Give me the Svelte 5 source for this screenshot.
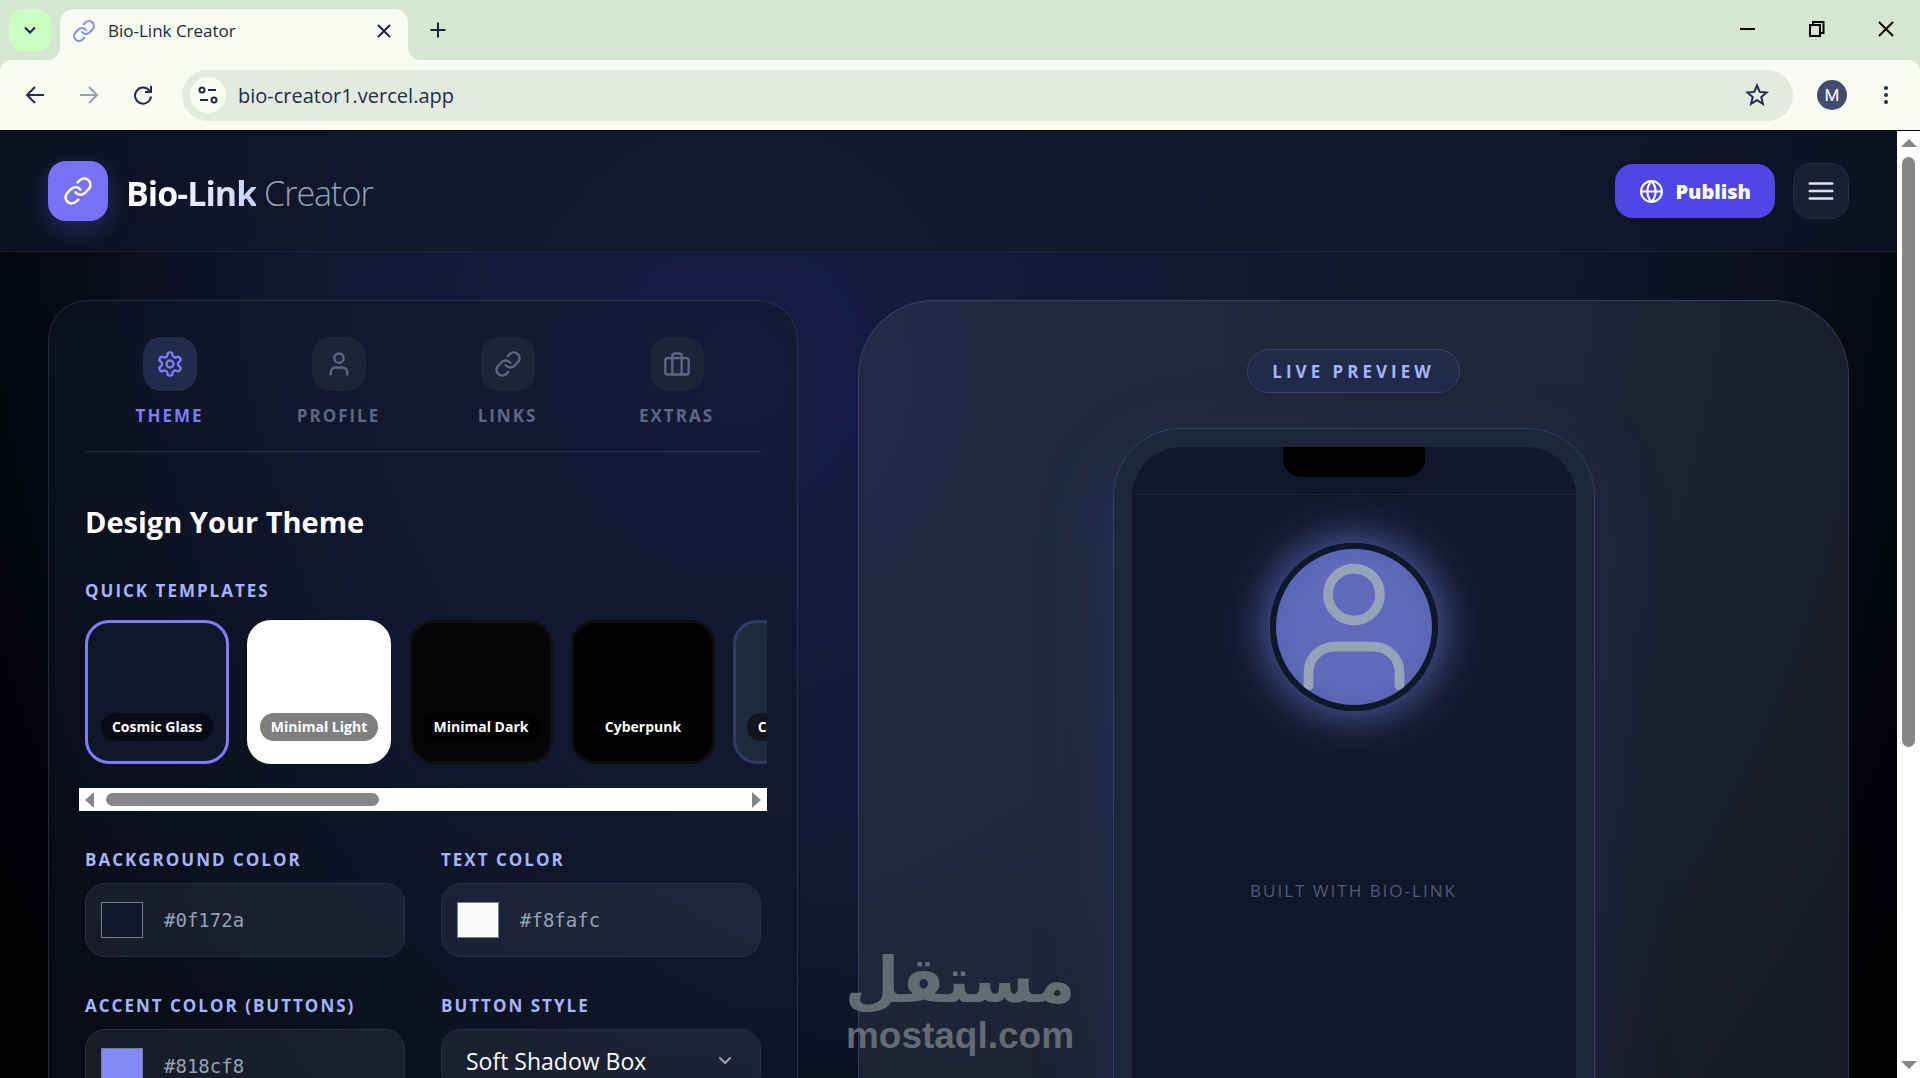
<script lang="ts">
  type Tab = { id: string; label: string };
  type Template = { name: string; cls: string };

  const tabs: Tab[] = [
    { id: 'theme', label: 'Theme' },
    { id: 'profile', label: 'Profile' },
    { id: 'links', label: 'Links' },
    { id: 'extras', label: 'Extras' },
  ];
  const templates: Template[] = [
    { name: 'Cosmic Glass', cls: 'cosmic' },
    { name: 'Minimal Light', cls: 'light' },
    { name: 'Minimal Dark', cls: 'dark' },
    { name: 'Cyberpunk', cls: 'cyber' },
    { name: 'Cotton Candy', cls: 'cotton' },
  ];

  let active = $state('theme');
  let template = $state('Cosmic Glass');
  let background = $state('#0f172a');
  let text = $state('#f8fafc');
  let accent = $state('#818cf8');
  let buttonStyle = $state('Soft Shadow Box');
</script>

{#snippet linkIcon()}
  <path d="M10 13a5 5 0 0 0 7.54.54l3-3a5 5 0 0 0-7.07-7.07l-1.72 1.71" />
  <path d="M14 11a5 5 0 0 0-7.54-.54l-3 3a5 5 0 0 0 7.07 7.07l1.71-1.71" />
{/snippet}

<div class="window">
  <div class="tabstrip">
    <button class="tab-search" aria-label="Search tabs">
      <svg viewBox="0 0 16 16" width="16" height="16"><path d="M3 5.5 8 10.5l5-5" /></svg>
    </button>
    <div class="tab">
      <svg class="favicon" viewBox="0 0 24 24" width="24" height="24">{@render linkIcon()}</svg>
      <span class="tab-title">Bio-Link Creator</span>
      <button class="tab-close" aria-label="Close tab">
        <svg viewBox="0 0 16 16" width="16" height="16"><path d="M2.500 2.500l11 11M13.500 2.500l-11 11" /></svg>
      </button>
    </div>
    <button class="new-tab" aria-label="New tab">
      <svg viewBox="0 0 16 16" width="16" height="16"><path d="M8 0.500v15M0.500 8h15" /></svg>
    </button>
    <div class="win-controls">
      <button aria-label="Minimize"><svg viewBox="0 0 16 16" width="16" height="16"><path d="M0 8h15" /></svg></button>
      <button aria-label="Restore">
        <svg viewBox="0 0 16 16" width="16" height="16"><path d="M1 4h10v11H1zM4 4V1h10.500v11H11" /></svg>
      </button>
      <button aria-label="Close"><svg viewBox="0 0 16 16" width="16" height="16"><path d="M1 1l14 14M15 1 1 15" /></svg></button>
    </div>
  </div>

  <div class="toolbar">
    <button class="nav" aria-label="Back">
      <svg viewBox="0 0 20 20" width="20" height="20"><path d="M19 10H2.500M10 2l-8 8 8 8" /></svg>
    </button>
    <button class="nav muted" aria-label="Forward">
      <svg viewBox="0 0 20 20" width="20" height="20"><path d="M1 10h16.500M10 2l8 8-8 8" /></svg>
    </button>
    <button class="nav" aria-label="Reload">
      <svg viewBox="0 0 20 20" width="20" height="20">
        <path d="M16.600 6A8 8 0 1 0 18 11.500" /><path d="M18 1v6h-6" />
      </svg>
    </button>
    <div class="omnibox">
      <button class="site-info" aria-label="Site information">
        <svg viewBox="0 0 20 20" width="20" height="20">
          <circle cx="4" cy="5" r="2.500" /><path d="M10 5h8M2 15h8" /><circle cx="16" cy="15" r="2.500" />
        </svg>
      </button>
      <input class="url" type="text" value="bio-creator1.vercel.app" aria-label="Address" />
      <button class="star" aria-label="Bookmark">
        <svg viewBox="0 0 24 24" width="24" height="24">
          <path d="M12 2.500l2.700 6.400 6.900.6-5.300 4.500 1.600 6.800L12 17.200l-5.900 3.600L7.700 14 2.400 9.500l6.900-.6z" />
        </svg>
      </button>
    </div>
    <button class="profile" aria-label="Profile M">M</button>
    <button class="menu" aria-label="Menu">
      <svg viewBox="0 0 6 20" width="6" height="20">
        <circle cx="3" cy="3" r="2" /><circle cx="3" cy="10" r="2" /><circle cx="3" cy="17" r="2" />
      </svg>
    </button>
  </div>

  <div class="viewport">
    <div class="page">
      <header>
        <div class="brand">
          <span class="logo"><svg viewBox="0 0 24 24" width="30" height="30">{@render linkIcon()}</svg></span>
          <h1><b>Bio-Link</b> Creator</h1>
        </div>
        <div class="actions">
          <button class="publish">
            <svg viewBox="0 0 24 24" width="25" height="25">
              <circle cx="12" cy="12" r="10" /><path d="M2 12h20" />
              <path d="M12 2a15.300 15.300 0 0 1 4 10 15.300 15.300 0 0 1-4 10 15.300 15.300 0 0 1-4-10 15.300 15.300 0 0 1 4-10z" />
            </svg>
            Publish
          </button>
          <button class="burger" aria-label="Open menu">
            <svg viewBox="0 0 24 24" width="30" height="30"><path d="M3 6h18M3 12h18M3 18h18" /></svg>
          </button>
        </div>
      </header>

      <main>
        <section class="editor">
          <nav class="tabs">
            {#each tabs as t (t.id)}
              <button class:on={active === t.id} onclick={() => (active = t.id)}>
                <span class="tab-icon">
                  <svg viewBox="0 0 24 24" width="28" height="28">
                    {#if t.id === 'theme'}
                      <path d="M12.220 2h-.44a2 2 0 0 0-2 2v.18a2 2 0 0 1-1 1.730l-.43.25a2 2 0 0 1-2 0l-.15-.08a2 2 0 0 0-2.730.73l-.22.38a2 2 0 0 0 .73 2.730l.15.1a2 2 0 0 1 1 1.720v.51a2 2 0 0 1-1 1.740l-.15.09a2 2 0 0 0-.73 2.730l.22.38a2 2 0 0 0 2.730.73l.15-.08a2 2 0 0 1 2 0l.43.25a2 2 0 0 1 1 1.730V20a2 2 0 0 0 2 2h.44a2 2 0 0 0 2-2v-.18a2 2 0 0 1 1-1.730l.43-.25a2 2 0 0 1 2 0l.15.08a2 2 0 0 0 2.730-.73l.22-.39a2 2 0 0 0-.73-2.730l-.15-.08a2 2 0 0 1-1-1.740v-.5a2 2 0 0 1 1-1.740l.15-.09a2 2 0 0 0 .73-2.730l-.22-.38a2 2 0 0 0-2.730-.73l-.15.08a2 2 0 0 1-2 0l-.43-.25a2 2 0 0 1-1-1.730V4a2 2 0 0 0-2-2z" />
                      <circle cx="12" cy="12" r="3" />
                    {:else if t.id === 'profile'}
                      <path d="M19 21v-2a4 4 0 0 0-4-4H9a4 4 0 0 0-4 4v2" />
                      <circle cx="12" cy="7" r="4" />
                    {:else if t.id === 'links'}
                      {@render linkIcon()}
                    {:else}
                      <rect x="2" y="7" width="20" height="14" rx="2" />
                      <path d="M16 21V5a2 2 0 0 0-2-2h-4a2 2 0 0 0-2 2v16" />
                    {/if}
                  </svg>
                </span>
                {t.label}
              </button>
            {/each}
          </nav>

          <h2>Design Your Theme</h2>

          <h3 class="label">Quick Templates</h3>
          <div class="strip">
            <div class="templates">
              {#each templates as t (t.name)}
                <button class="template {t.cls}" class:selected={template === t.name} onclick={() => (template = t.name)}>
                  <span>{t.name}</span>
                </button>
              {/each}
            </div>
            <div class="hbar">
              <svg viewBox="0 0 10 16" width="10" height="16"><path d="M9 0v16L0 8z" /></svg>
              <div class="htrack"><div class="hthumb"></div></div>
              <svg viewBox="0 0 10 16" width="10" height="16"><path d="M1 0v16l9-8z" /></svg>
            </div>
          </div>

          <div class="fields">
            <div class="field">
              <label class="label" for="bg-color">Background Color</label>
              <div class="box"><input id="bg-color" type="color" bind:value={background} /><span class="hex">{background}</span></div>
            </div>
            <div class="field">
              <label class="label" for="text-color">Text Color</label>
              <div class="box"><input id="text-color" type="color" bind:value={text} /><span class="hex">{text}</span></div>
            </div>
            <div class="field">
              <label class="label" for="accent-color">Accent Color (Buttons)</label>
              <div class="box"><input id="accent-color" type="color" bind:value={accent} /><span class="hex">{accent}</span></div>
            </div>
            <div class="field">
              <label class="label" for="button-style">Button Style</label>
              <div class="box select">
                <select id="button-style" bind:value={buttonStyle}>
                  <option>Soft Shadow Box</option>
                </select>
                <svg viewBox="0 0 14 10" width="14" height="10"><path d="M2 2l5 5 5-5" /></svg>
              </div>
            </div>
          </div>
        </section>

        <section class="preview">
          <span class="pill">Live Preview</span>
          <div class="phone">
            <div class="screen">
              <div class="status"><div class="notch"></div></div>
              <div class="avatar">
                <svg viewBox="0 0 24 24" width="156" height="156">
                  <path d="M19 21v-2a4 4 0 0 0-4-4H9a4 4 0 0 0-4 4v2" />
                  <circle cx="12" cy="7" r="4" />
                </svg>
              </div>
              <p class="built">Built with Bio-Link</p>
            </div>
          </div>
        </section>
      </main>
    </div>

    <div class="vbar">
      <svg viewBox="0 0 16 8" width="16" height="8"><path d="M8 0l8 8H0z" /></svg>
      <div class="vtrack"><div class="vthumb"></div></div>
      <svg viewBox="0 0 16 8" width="16" height="8"><path d="M8 8l8-8H0z" /></svg>
    </div>
  </div>

  <div class="watermark">
    <span class="ar" lang="ar" dir="rtl">مستقل</span>
    <span class="en">mostaql.com</span>
  </div>
</div>

<style>
  :global(body) { margin: 0; background: #000; }
  .window { position: relative; height: 100vh; display: flex; flex-direction: column; overflow: hidden; background: #d5e7cf; font-family: 'Open Sans', 'Noto Sans', sans-serif; color: #fff; }
  .window :global(*) { box-sizing: border-box; }
  button { border: none; background: none; padding: 0; font: inherit; color: inherit; cursor: pointer; display: grid; place-items: center; }
  svg { display: block; fill: none; stroke: currentColor; stroke-width: 2; stroke-linecap: round; stroke-linejoin: round; }

  /* browser frame */
  .tabstrip { flex: none; height: 60px; display: flex; align-items: flex-start; padding: 9px 0 0 9px; color: #1b2540; }
  .tab-search { width: 42px; height: 42px; border-radius: 14px; background: #ccffc3; }
  .tab-search svg { stroke-linecap: butt; stroke-linejoin: miter; }
  .tab { position: relative; width: 348px; height: 51px; margin-left: 9px; padding: 0 14px 8px 12px; display: flex; align-items: center; gap: 12px; background: #f8fcf2; border-radius: 14px 14px 0 0; }
  .tab::before, .tab::after { content: ''; position: absolute; bottom: 0; width: 14px; height: 14px; }
  .tab::before { right: 100%; background: radial-gradient(circle at 0 0, transparent 14px, #f8fcf2 15px); }
  .tab::after { left: 100%; background: radial-gradient(circle at 100% 0, transparent 14px, #f8fcf2 15px); }
  .favicon { color: #818cf8; }
  .tab-title { flex: 1; font-size: 17px; color: #1f2937; }
  .tab-close { width: 20px; height: 20px; }
  .new-tab { width: 42px; height: 42px; margin-left: 9px; }
  .new-tab svg { stroke-linecap: butt; }
  .win-controls { margin-left: auto; display: flex; color: #000; }
  .win-controls button { width: 69px; height: 40px; }
  .win-controls svg { stroke-linecap: butt; stroke-linejoin: miter; }
  .toolbar { flex: none; height: 70px; padding: 0 31px 0 25px; display: flex; align-items: center; background: #f8fcf2; border-radius: 12px 12px 0 0; color: #232c49; }
  .nav { width: 20px; height: 20px; margin-right: 34px; }
  .nav svg { stroke-linecap: butt; stroke-linejoin: miter; }
  .nav.muted { color: #94a0ae; }
  .omnibox { flex: 1; height: 51px; margin-left: -5px; padding: 0 24px 0 8px; display: flex; align-items: center; gap: 12px; background: #e3ebe0; border-radius: 26px; }
  .site-info { width: 36px; height: 36px; border-radius: 50%; background: #f8fcf2; }
  .site-info svg { stroke-linecap: butt; }
  .url { flex: 1; min-width: 0; padding: 0; border: none; outline: none; background: none; font: inherit; font-size: 20px; color: #232c49; }
  .star svg { stroke-linejoin: miter; }
  .profile { width: 30px; height: 30px; margin-left: 24px; border-radius: 50%; background: #434c70; color: #fff; font-family: Roboto, sans-serif; font-size: 17px; }
  .menu { margin-left: 36px; }
  .menu svg { fill: currentColor; stroke: none; }

  .viewport { flex: 1; min-height: 0; display: flex; border-top: 1px solid #000; background: #000; }
  .page {
    flex: 1; min-width: 0; overflow: hidden;
    background:
      radial-gradient(ellipse 660px 720px at 740px 240px, rgba(30, 34, 100, 0.48), rgba(26, 32, 90, 0.28) 50%, rgba(26, 32, 90, 0) 100%),
      radial-gradient(ellipse 1000px 1300px at 960px 0, #0f172a 0%, #0f172a 60%, #0a0e1b 84%, #05080f 95%, #000103 112%);
  }
  .vbar { flex: none; width: 23px; padding: 8px 0 9px; display: flex; flex-direction: column; align-items: center; gap: 10px; background: #fff; }
  .vbar svg, .hbar svg { flex: none; fill: #868686; stroke: none; }
  .vtrack { flex: 1; width: 13px; }
  .vthumb { width: 13px; height: 66%; border-radius: 7px; background: #868686; }

  header { height: 121px; padding: 0 48px; display: flex; align-items: center; justify-content: space-between; background: rgba(15, 23, 42, 0.65); border-bottom: 1px solid rgba(255, 255, 255, 0.06); }
  .brand, .actions { display: flex; align-items: center; gap: 18px; }
  .logo { width: 60px; height: 60px; display: grid; place-items: center; border-radius: 18px; background: #7671f5; box-shadow: 0 8px 24px rgba(99, 102, 241, 0.3); }
  h1 { margin: 0; padding-top: 3px; font-size: 34px; line-height: 48px; font-weight: 300; letter-spacing: -1px; color: #94a3b8; }
  h1 b { font-weight: 700; background: linear-gradient(90deg, #fff 20%, #c7d2fe); background-clip: text; -webkit-text-fill-color: transparent; }
  .publish { height: 54px; padding: 0 24px; display: flex; align-items: center; gap: 11px; border-radius: 18px; background: #4f46e5; font-size: 20px; font-weight: 800; }
  .burger { width: 56px; height: 56px; border: 1px solid #232c45; border-radius: 18px; background: #1a2032; color: #dbe4f5; }

  main { padding: 48px; display: grid; grid-template-columns: minmax(0, 750px) minmax(0, 1fr); gap: 60px; }
  .editor { padding: 36px; border: 1px solid rgba(148, 163, 184, 0.18); border-radius: 40px; background: rgba(15, 23, 42, 0.5); }
  .tabs { display: grid; grid-template-columns: repeat(4, 1fr); padding-bottom: 23px; border-bottom: 1px solid rgba(148, 163, 184, 0.18); }
  .tabs button { gap: 13px; font-size: 17px; line-height: 24px; font-weight: 700; letter-spacing: 2px; text-transform: uppercase; color: #5d6785; }
  .tab-icon { width: 54px; height: 54px; display: grid; place-items: center; border-radius: 18px; background: #1d2438; }
  .tabs button.on { color: #7f7cfa; }
  .tabs button.on .tab-icon { background: #232b4c; }
  h2 { margin: 50px 0 37px; font-size: 29px; line-height: 40px; font-weight: 700; }
  .label { display: block; margin: 0; font-size: 17px; line-height: 24px; font-weight: 700; letter-spacing: 2px; text-transform: uppercase; color: #a5b4fc; }
  .strip { margin: 11px -6px 37px; }
  .templates { display: flex; gap: 18px; padding: 6px 6px 24px; overflow: hidden; }
  .template { flex: none; width: 144px; height: 144px; padding-bottom: 20px; align-items: end; border: 3px solid rgba(255, 255, 255, 0.05); border-radius: 24px; }
  .template span { padding: 0 11px; border-radius: 14px; background: rgba(0, 0, 0, 0.5); font-size: 14px; line-height: 28px; font-weight: 700; white-space: nowrap; }
  .template.cosmic { background: #0f172a; }
  .template.light { background: #fff; border-color: #fff; }
  .template.dark { background: #050508; }
  .template.cyber { background: #000; }
  .template.cotton { background: #1e293b; border-color: #323c60; }
  .template.selected { border-color: #7f7cfa; }
  .hbar { height: 23px; padding: 0 6px; display: flex; align-items: center; gap: 11px; background: #fff; }
  .htrack { flex: 1; }
  .hthumb { width: 43%; height: 13px; border-radius: 7px; background: #868686; }

  .fields { display: grid; grid-template-columns: 1fr 1fr; align-items: start; gap: 37px 36px; }
  .field { display: flex; flex-direction: column; gap: 11px; min-width: 0; }
  .box { height: 74px; padding: 0 15px; display: flex; align-items: center; gap: 21px; border: 1px solid #262f4b; border-radius: 20px; background: rgba(148, 163, 184, 0.1); }
  input[type='color'] { width: 42px; height: 36px; padding: 0; border: 1px solid #767f8c; background: none; }
  input[type='color']::-webkit-color-swatch-wrapper { padding: 0; }
  input[type='color']::-webkit-color-swatch { border: none; border-radius: 0; }
  .hex { font-family: 'DejaVu Sans Mono', monospace; font-size: 19px; color: #94a3b8; }
  .box.select { height: 64px; padding: 0 28px 0 24px; color: #94a3b8; }
  select { flex: 1; min-width: 0; height: 48px; padding: 0; border: none; outline: none; appearance: none; background: none; font: inherit; font-size: 23px; color: #f8fafc; }

  .preview { display: flex; flex-direction: column; align-items: center; padding: 48px; border: 1px solid rgba(99, 102, 180, 0.35); border-radius: 76px; background: rgba(52, 62, 78, 0.4); }
  .pill { height: 44px; padding: 0 24px; border: 1px solid #39436a; border-radius: 22px; background: #222a4a; font-size: 17px; line-height: 43px; font-weight: 700; letter-spacing: 4px; text-transform: uppercase; color: #a5b4fc; }
  .phone { width: 100%; max-width: 482px; margin-top: 35px; padding: 18px; border: 1px solid #343e66; border-radius: 68px; background: #1c2739; box-shadow: 0 24px 80px rgba(60, 70, 160, 0.22); }
  .screen { height: 960px; border-radius: 50px; overflow: hidden; background: #0f172a; display: flex; flex-direction: column; align-items: center; }
  .status { flex: none; width: 100%; height: 48px; border-bottom: 1px solid rgba(255, 255, 255, 0.06); }
  .notch { width: 142px; height: 30px; margin: 0 auto; border-radius: 0 0 18px 18px; background: #000; }
  .avatar { flex: none; width: 168px; height: 168px; margin-top: 48px; border: 6px solid #0f172a; border-radius: 50%; background: radial-gradient(circle, #5f6abc 55%, #525da6 100%); box-shadow: 0 0 50px rgba(129, 140, 248, 0.75); color: #94a3b8; overflow: hidden; }
  .avatar svg { stroke-width: 1.5; }
  .built { margin: 168px 0 0; font-size: 17px; line-height: 24px; font-weight: 400; letter-spacing: 2px; text-transform: uppercase; color: #505b75; }

  .watermark { position: absolute; left: 44%; bottom: 20px; display: flex; flex-direction: column; align-items: center; color: #636a74; pointer-events: none; }
  .ar { font-family: 'DejaVu Sans', sans-serif; font-weight: 700; font-size: 63px; line-height: 66px; }
  .en { font-family: 'Liberation Sans', sans-serif; font-weight: 700; font-size: 37px; line-height: 44px; }
</style>
